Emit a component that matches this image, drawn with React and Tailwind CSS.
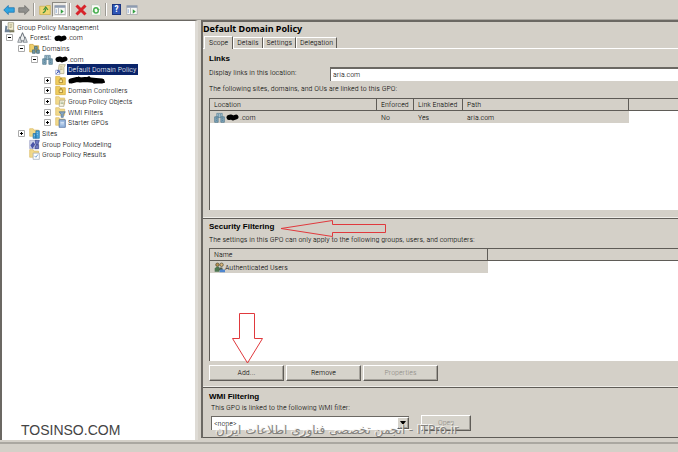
import { useState } from 'react'

const raised = 'bg-[#d6d3cb] border border-t-white border-l-white border-r-[#5f5c57] border-b-[#5f5c57] shadow-[inset_-1px_-1px_0_#a5a29b]'
const btn = `h-4 w-[75px] text-center leading-3 ${raised}`
const heading = "font-['Liberation_Sans',sans-serif] font-bold text-[8px] leading-[11px] text-black"

const GLYPHS = {
  console: (
    <>
      <path d="M6 1h8v11H6z" fill="#f4efd2" stroke="#8d8a72" />
      <path d="M8 4h4M8 6h4M8 8h3" stroke="#a09b76" />
      <path d="M2 5l3 1-1 5h4l2 4H1z" fill="#6f8296" />
      <path d="M8 12h7v3H8z" fill="#7c7a5c" />
    </>
  ),
  forest: (
    <>
      <path d="M8 1l5 12H3z" fill="#eef0f1" stroke="#5f666e" strokeWidth="1.400" />
      <path d="M4 7l3 8H1zM12 7l3 8H9z" fill="#d3d6d9" stroke="#6f767e" />
    </>
  ),
  domains: (
    <>
      <path d="M1 2h5l1 2h7v9H1z" fill="#efcf6b" stroke="#c39a35" />
      <path d="M8 5h4v4H8zM5 10h4v5H5zM11 10h4v5h-4z" fill="#6f9aa8" stroke="#41626f" />
    </>
  ),
  domain: (
    <>
      <path d="M4 2h8v6H4z" fill="#9dbccb" stroke="#5c8297" />
      <path d="M1 7h5v8H1zM10 7h5v8h-5z" fill="#7fa6bb" stroke="#4b7188" />
      <path d="M6 4h1M9 4h1M6 6h1M9 6h1M3 9h1M3 12h1M12 9h1M12 12h1" stroke="#35566b" />
    </>
  ),
  link: (
    <>
      <path d="M6 1h9l-2 4v9H4z" fill="#efe9c8" stroke="#aaa37d" />
      <path d="M7 4h4M7 6h4M7 8h4" stroke="#b9b187" />
      <path d="M1 9h6v6H1z" fill="#fff" stroke="#7f8fc4" />
      <path d="M2 14l3-3M3 10h3v3" stroke="#1d3da8" fill="none" strokeWidth="1.300" />
    </>
  ),
  ou: (
    <>
      <path d="M1 2h6l1 2h7v10H1z" fill="#f0cd5d" stroke="#d1aa42" />
      <path d="M6 7h5v4H6z" fill="#fbeeb0" stroke="#96721c" />
      <path d="M7 5h3" stroke="#96721c" />
    </>
  ),
  gpo: (
    <>
      <path d="M1 1h5l1 2h7v9H1z" fill="#f2d98a" stroke="#dcbc68" />
      <path d="M7 6h8l-2 4v5H6z" fill="#f8f5e4" stroke="#a19b7a" />
      <path d="M8 9h4M8 11h4" stroke="#8fa17a" />
    </>
  ),
  wmi: (
    <>
      <path d="M1 1h5l1 2h7v9H1z" fill="#f2d98a" stroke="#dcbc68" />
      <path d="M6 7h9l-3 4v4h-3v-4z" fill="#8aa8c4" stroke="#4c6d8e" />
    </>
  ),
  starter: (
    <>
      <path d="M1 1h5l1 2h7v9H1z" fill="#f2d98a" stroke="#dcbc68" />
      <path d="M6 4h9v11H6z" fill="#9dbbe0" stroke="#3f6298" />
      <path d="M8 8h5M8 10h5" stroke="#e9f1fb" />
    </>
  ),
  sites: (
    <>
      <path d="M1 1h5l1 2h7v9H1z" fill="#f2d98a" stroke="#dcbc68" />
      <path d="M6 8h4v7H6zM10 4h5v11h-5z" fill="#49a3d8" stroke="#1f6da3" />
      <path d="M12 6v1M12 9v1M8 10v1" stroke="#dff1fc" />
    </>
  ),
  modeling: (
    <>
      <path d="M1 2h10v12H1z" fill="#cfd3e8" stroke="#9a9fc4" />
      <path d="M2 9l4-5 3 4-4 6z" fill="#4a55a8" />
      <path d="M9 2h6l-2 6h-3zM9 10l5-2v6H9z" fill="#6e78c0" stroke="#38418c" />
    </>
  ),
  results: (
    <>
      <path d="M1 1h5l1 2h7v9H1z" fill="#f2d98a" stroke="#dcbc68" />
      <path d="M6 6h9v9H6z" fill="#fff" stroke="#9aa6b5" />
      <path d="M8 10l2 2 3-4" stroke="#3d7fc0" fill="none" />
    </>
  ),
  users: (
    <>
      <circle cx="5" cy="4" r="2.500" fill="#b98f50" stroke="#4c4a32" />
      <circle cx="11" cy="4" r="2.500" fill="#d9b37a" stroke="#4c4a32" />
      <path d="M1 14V9l3-2h3l1 2v5z" fill="#4c7650" />
      <path d="M7 12l1-4h4l1 4z" fill="#4c5a50" />
      <path d="M9 11h7v4H8z" fill="#4f86cf" />
    </>
  ),
  back: <path d="M1 8l6-6v3h8v6H7v3z" fill="#2fa4e0" stroke="#1b72ad" />,
  forward: <path d="M15 8L9 2v3H1v6h8v3z" fill="#8f8f8c" stroke="#6d6d6a" />,
  up: (
    <>
      <path d="M1 3h8l1-1h5v12H1z" fill="#efd672" stroke="#c9ad50" />
      <path d="M5 12c3-1 4-3 4-6M6 8l3-4 3 4" fill="none" stroke="#3d8f3a" strokeWidth="1.500" />
    </>
  ),
  pane: (
    <>
      <path d="M1 2h14v12H1z" fill="#f7f7f5" stroke="#a3a6aa" />
      <path d="M1 2h14v3H1z" fill="#8d9bb0" />
      <path d="M6 5v9" stroke="#a3a6aa" />
      <path d="M3 7v5" stroke="#7b9ccc" />
      <path d="M9 7l4 3-4 3z" fill="#36a043" />
    </>
  ),
  remove: <path d="M2 2l12 12M14 2L2 14" stroke="#d8232a" strokeWidth="4" />,
  refresh: (
    <>
      <path d="M2 1h9l3 3v11H2z" fill="#fafcf8" stroke="#b9c6b7" />
      <path d="M5 8c0-4 6-4 6 0M11 9c0 4-6 4-6 0" fill="none" stroke="#43ac4b" strokeWidth="1.800" />
      <path d="M9 7h4l-2 3zM3 10h4L5 7z" fill="#43ac4b" />
    </>
  ),
}

function Glyph({ name, className = 'size-[11px]' }) {
  return (
    <svg viewBox="0 0 16 16" className={`shrink-0 ${className}`} aria-hidden="true">
      {GLYPHS[name]}
    </svg>
  )
}

function Scribble({ wide }) {
  return wide ? (
    <svg viewBox="0 0 38 8" className="w-[38px] h-2" aria-hidden="true">
      <path d="M3 5l6-1.500 3 .5 5-.5 6 .5 5 .5 6 .5" fill="none" stroke="#000" strokeWidth="5" strokeLinecap="round" strokeLinejoin="round" />
      <path d="M1 7l4-3M10 1l5 3 6-3 5 6 11-1" fill="none" stroke="#000" strokeWidth="1.500" />
    </svg>
  ) : (
    <svg viewBox="0 0 13 8" className="w-[13px] h-2" aria-hidden="true">
      <path d="M3 4.500l2-.5M7 5l3-1" fill="none" stroke="#000" strokeWidth="5" strokeLinecap="round" />
    </svg>
  )
}

const tree = [
  { icon: 'console', label: 'Group Policy Management', pad: 'pl-[2px]' },
  { icon: 'forest', label: 'Forest:', hidden: true, box: '-', pad: 'pl-1' },
  { icon: 'domains', label: 'Domains', box: '-', pad: 'pl-4' },
  { icon: 'domain', hidden: true, box: '-', pad: 'pl-[29px]' },
  { icon: 'link', label: 'Default Domain Policy', selected: true, pad: 'pl-[53px]' },
  { icon: 'ou', scribble: true, box: '+', pad: 'pl-[42px]' },
  { icon: 'ou', label: 'Domain Controllers', box: '+', pad: 'pl-[42px]' },
  { icon: 'gpo', label: 'Group Policy Objects', box: '+', pad: 'pl-[42px]' },
  { icon: 'wmi', label: 'WMI Filters', box: '+', pad: 'pl-[42px]' },
  { icon: 'starter', label: 'Starter GPOs', box: '+', pad: 'pl-[42px]' },
  { icon: 'sites', label: 'Sites', box: '+', pad: 'pl-4' },
  { icon: 'modeling', label: 'Group Policy Modeling', pad: 'pl-[27px]' },
  { icon: 'results', label: 'Group Policy Results', pad: 'pl-[27px]' },
]

function TreeRow({ item }) {
  return (
    <li className={`flex flex-1 min-h-0 items-center ${item.pad}`}>
      {item.box && (
        <button aria-label={item.box === '+' ? 'Expand' : 'Collapse'} className="mr-1 shrink-0">
          <svg viewBox="0 0 7 7" className="size-[7px]">
            <path d="M.5.5h6v6h-6z" fill="#fff" stroke="#aaa" />
            <path d={item.box === '+' ? 'M2 3.500h3M3.500 2v3' : 'M2 3.500h3'} stroke="#000" />
          </svg>
        </button>
      )}
      <Glyph name={item.icon} />
      <span className={`ml-px px-px flex items-center gap-[3px] leading-[11px] whitespace-nowrap ${item.selected ? 'bg-[#0a246a] text-white pr-[2px]' : ''}`}>
        {item.label}
        {item.hidden && <span className="flex items-center"><Scribble />.com</span>}
        {item.scribble && <Scribble wide />}
      </span>
    </li>
  )
}

function ToolButton({ icon, label, pressed }) {
  return (
    <button aria-label={label} className={`flex items-center justify-center w-[15px] h-[15px] ${pressed ? 'bg-[#eceae5] border border-[#8b8880] border-r-white border-b-white' : ''}`}>
      {icon ? <Glyph name={icon} className="size-3" /> : <span className="w-[9px] h-[11px] bg-[#2f55b5] border border-[#1c3680] text-white font-bold text-[9px] leading-[9px]">?</span>}
    </button>
  )
}

function Divider() {
  return <span className="w-[2px] h-[13px] mx-[2px] border-l border-l-[#9d9a93] border-r border-r-white" />
}

function Th({ children, className = '' }) {
  return (
    <th className={`h-3 p-0 pl-1 text-left font-light whitespace-nowrap bg-[#d4d0c8] border-r last:border-r-0 border-b border-[#5f5c57] leading-[10px] ${className}`}>
      {children}
    </th>
  )
}

function Rule() {
  return <div className="h-[2px] border-t border-t-[#efede8] bg-[#5f5c57]" />
}

const tabs = ['Scope', 'Details', 'Settings', 'Delegation']

export default function App() {
  const [tab, setTab] = useState('Scope')

  return (
    <div className="min-h-screen flex flex-col bg-[#d4d0c8] text-black font-light text-[8px] leading-[11px] font-['Roboto_Condensed','Roboto',sans-serif] overflow-hidden">
      <header className="h-5 flex items-center pl-px border-b border-[#aaa7a0]">
        <ToolButton icon="back" label="Back" />
        <ToolButton icon="forward" label="Forward" />
        <Divider />
        <ToolButton icon="up" label="Up one level" />
        <ToolButton icon="pane" label="Console tree" pressed />
        <Divider />
        <ToolButton icon="remove" label="Delete" />
        <ToolButton icon="refresh" label="Refresh" />
        <Divider />
        <ToolButton label="Help" />
        <ToolButton icon="pane" label="Action pane" />
      </header>

      <div className="flex-1 flex">
        <nav className="relative w-[198px] shrink-0 bg-white border-t border-l-2 border-[#6b6863] border-r-[3px] border-r-[#dedbd5]">
          <ul className="flex flex-col h-[138px] mt-px">
            {tree.map((item, i) => <TreeRow key={i} item={item} />)}
          </ul>
          <p className="absolute left-[19px] bottom-0 text-[14px] leading-5 font-normal text-[#444] font-['Liberation_Sans',sans-serif]">TOSINSO.COM</p>
        </nav>

        <main className="ml-[3px] mb-[2px] flex-1 min-w-0 flex flex-col border-l-2 border-t-2 border-[#6b6863]">
          <h1 className="font-['Noto_Sans',sans-serif] font-bold text-[9px] leading-[14px]">Default Domain Policy</h1>
          <div role="tablist" className="flex items-end h-[13px] pl-px border-b border-white">
            {tabs.map(name => (
              <button
                key={name}
                role="tab"
                aria-selected={tab === name}
                onClick={() => setTab(name)}
                className={`border-t border-l border-t-white border-l-white border-r border-r-[#5f5c57] leading-[10px] bg-[#d4d0c8] ${tab === name ? 'h-[13px] -mb-px px-1' : 'h-[11px] px-[3px]'}`}
              >
                {name}
              </button>
            ))}
          </div>

          <section className="pl-[6px] pt-1 pb-[7px]">
            <h2 className={heading}>Links</h2>
            <div className="flex mt-[3px]">
              <label htmlFor="location" className="w-[121px] leading-[11px]">Display links in this location:</label>
              <select id="location" className="appearance-none flex-1 h-[14px] pl-[2px] bg-white border-t-2 border-l border-[#6b6863] leading-3">
                <option>aria.com</option>
              </select>
            </div>
            <p className="mt-[2px] mb-[3px] leading-3">The following sites, domains, and OUs are linked to this GPO:</p>
            <div className="h-[112px] bg-white border-t border-l border-[#5f5c57]">
              <table className="w-full table-fixed border-separate border-spacing-0">
                <thead>
                  <tr>
                    <Th className="w-[167px]">Location</Th>
                    <Th className="w-[37px]">Enforced</Th>
                    <Th className="w-[49px]">Link Enabled</Th>
                    <Th className="w-[166px]">Path</Th>
                    <Th />
                  </tr>
                </thead>
                <tbody>
                  <tr className="[&>td]:bg-[#d4d0c8] [&>td]:p-0 [&>td]:pl-1 [&>td]:h-3">
                    <td><span className="flex items-center gap-px"><Glyph name="domain" /><Scribble />.com</span></td>
                    <td>No</td>
                    <td>Yes</td>
                    <td>aria.com</td>
                  </tr>
                </tbody>
              </table>
            </div>
          </section>
          <Rule />

          <section className="relative flex-1 flex flex-col pl-[6px] pt-[2px] pb-[5px]">
            <h2 className={heading}>Security Filtering</h2>
            <p className="mt-[2px] mb-[2px] leading-3">The settings in this GPO can only apply to the following groups, users, and computers:</p>
            <div className="flex-1 bg-white border-t border-l border-[#5f5c57]">
              <table className="w-full table-fixed border-separate border-spacing-0">
                <thead>
                  <tr><Th className="w-[278px]">Name</Th><Th /></tr>
                </thead>
                <tbody>
                  <tr>
                    <td className="bg-[#d4d0c8] h-3 p-0 pl-1"><span className="flex items-center"><Glyph name="users" />Authenticated Users</span></td>
                  </tr>
                </tbody>
              </table>
            </div>
            <div className="flex gap-[2px] mt-1">
              <button className={btn}>Add...</button>
              <button className={btn}>Remove</button>
              <button className={`${btn} text-[#8f8c86]`} disabled>Properties</button>
            </div>
            <svg viewBox="0 0 107 18" className="absolute left-[77px] top-0 w-[107px] h-[18px]" fill="none" stroke="#e0393d" aria-hidden="true">
              <path d="M1 9.500L52.500 1.500v4h53v8h-53v4z" />
            </svg>
            <svg viewBox="0 0 33 52" className="absolute left-[28px] bottom-[22px] w-[33px] h-[52px]" fill="none" stroke="#e0393d" aria-hidden="true">
              <path d="M8.500 1.500h15v25h8L16.500 51 1.500 26.500h7z" />
            </svg>
          </section>
          <Rule />

          <section className="relative pl-[6px] pt-[3px] h-[50px] border-b border-[#5f5c57]">
            <h2 className={heading}>WMI Filtering</h2>
            <label htmlFor="wmi" className="block pl-[2px] leading-3">This GPO is linked to the following WMI filter:</label>
            <div className="flex items-center gap-3 pl-[2px] mt-px">
              <div className="relative w-[198px]">
                <select id="wmi" className="appearance-none block w-full h-[14px] pl-[2px] bg-white border-t border-l border-[#6b6863] leading-3">
                  <option>&lt;none&gt;</option>
                </select>
                <span className={`pointer-events-none absolute right-0 top-px size-3 flex items-center justify-center ${raised}`}>
                  <svg viewBox="0 0 6 4" className="w-[6px] h-1"><path d="M0 0h6L3 4z" /></svg>
                </span>
              </div>
              <button className={`w-[50px] h-4 leading-3 text-[#8f8c86] ${raised}`} disabled>Open</button>
            </div>
            <p dir="rtl" className="absolute left-[13px] top-[34px] whitespace-nowrap text-[12px] leading-4 font-normal text-[#84827e] font-['DejaVu_Sans',sans-serif] [text-shadow:-1px_-1px_0_#f4f3f0]">
              ITPro.ir - انجمن تخصصی فناوری اطلاعات ایران
            </p>
          </section>
        </main>
      </div>

      <footer className="h-[10px] mt-[2px] border-t-2 border-[#aaa7a0]" />
    </div>
  )
}
